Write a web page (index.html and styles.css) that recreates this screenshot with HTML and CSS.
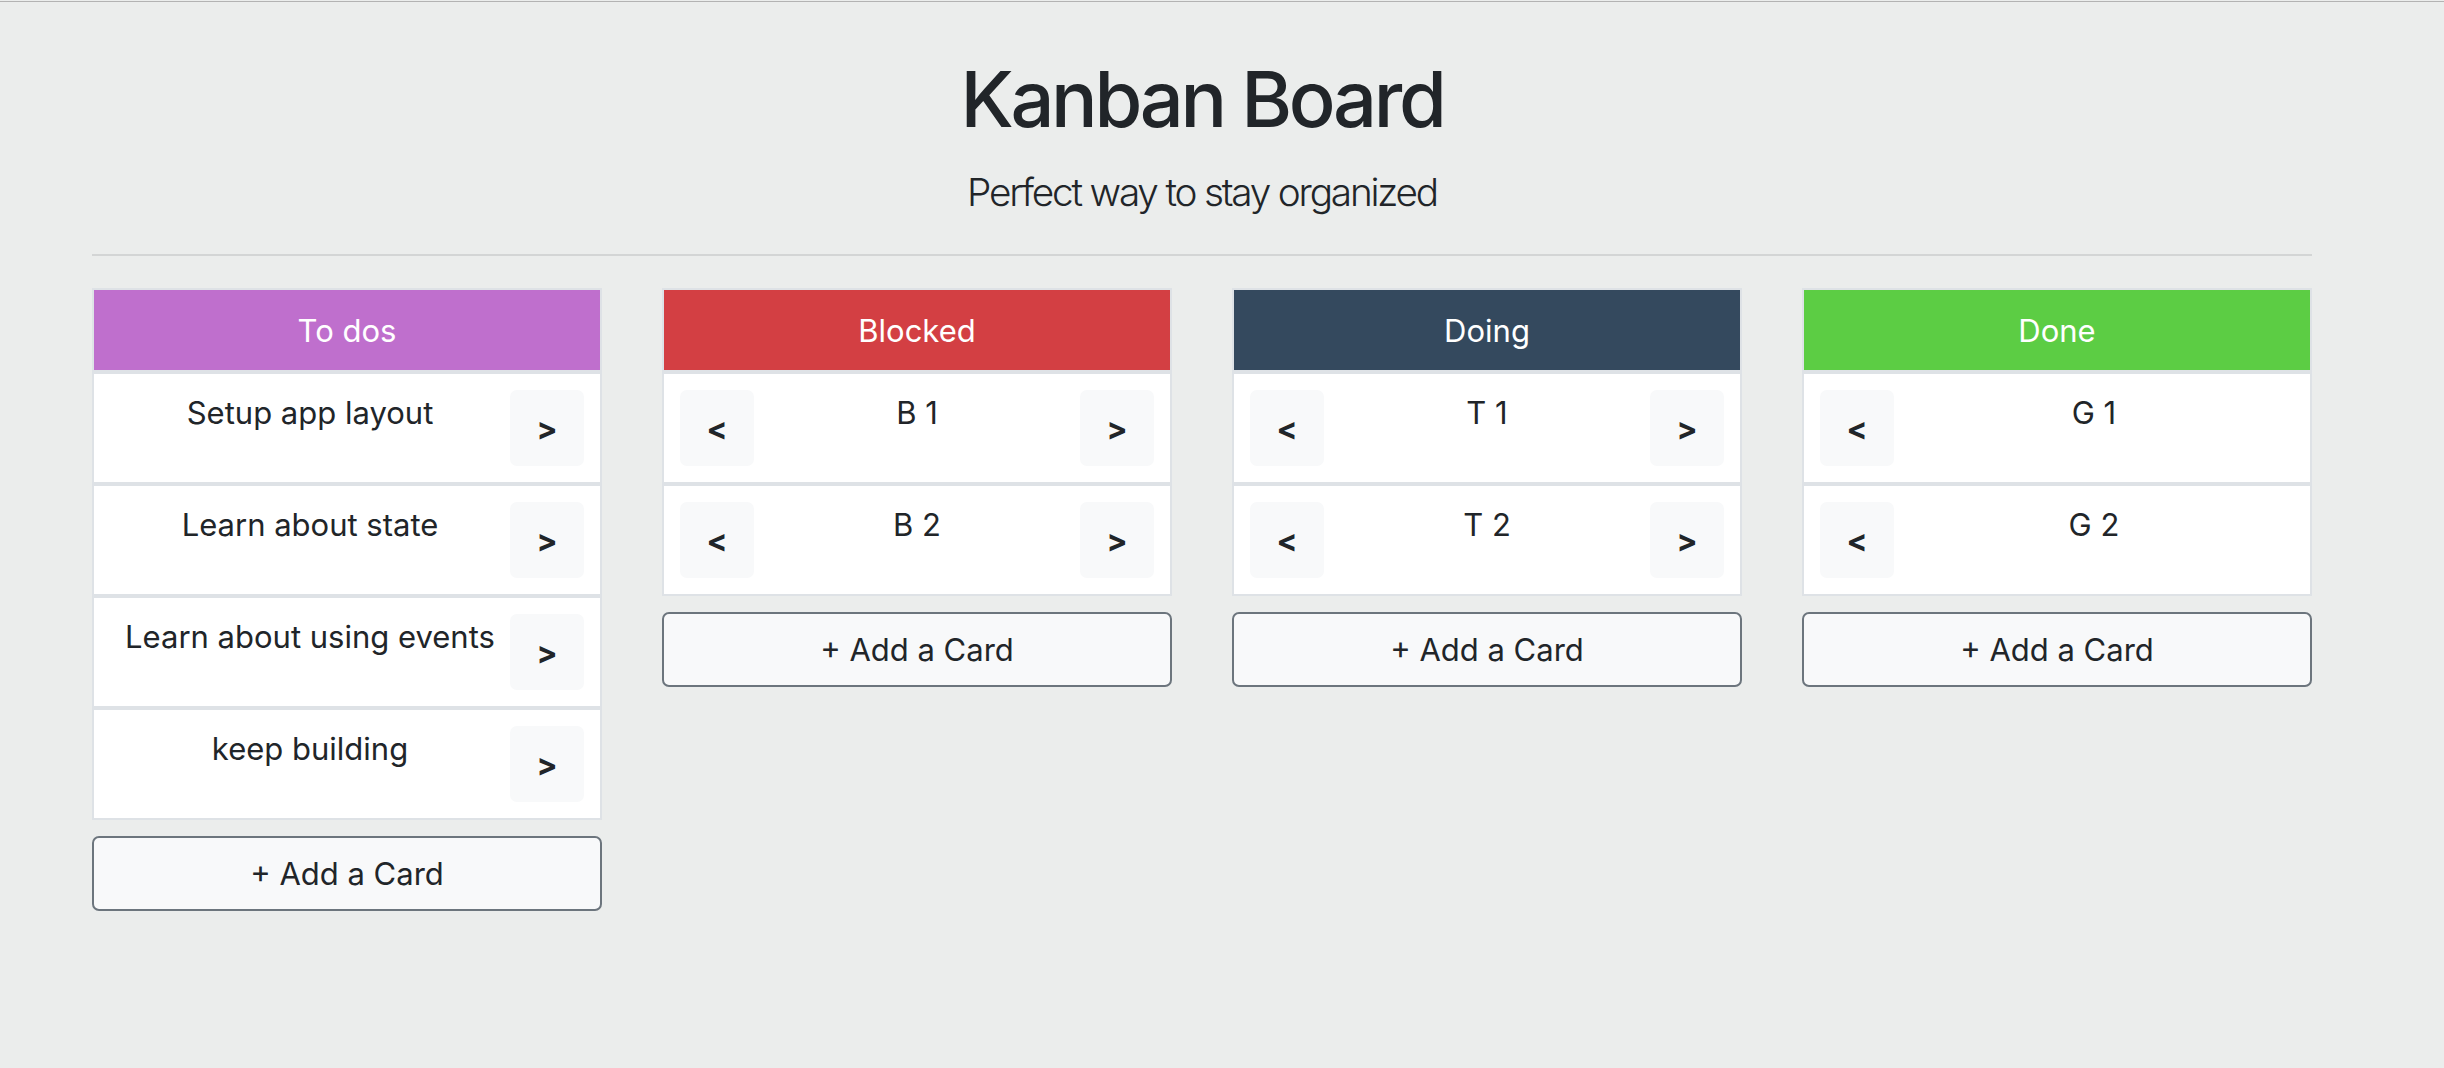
FILE: index.html
```html
<!DOCTYPE html>
<html lang="en">
<head>
<meta charset="utf-8">
<title>Kanban Board</title>
<link rel="stylesheet" href="styles.css">
</head>
<body>
<div class="topline"></div>
<main class="page">
  <h1 class="title">Kanban Board</h1>
  <p class="lead">Perfect way to stay organized</p>
  <hr class="divider">
  <section class="board">
    <div class="lane">
      <div class="column">
        <div class="col-header todo">To dos</div>
        <div class="card"><div class="card-text">Setup app layout</div><button class="move-btn">&gt;</button></div>
        <div class="card"><div class="card-text">Learn about state</div><button class="move-btn">&gt;</button></div>
        <div class="card"><div class="card-text">Learn about using events</div><button class="move-btn">&gt;</button></div>
        <div class="card"><div class="card-text">keep building</div><button class="move-btn">&gt;</button></div>
      </div>
      <button class="add-btn">+ Add a Card</button>
    </div>
    <div class="lane">
      <div class="column">
        <div class="col-header blocked">Blocked</div>
        <div class="card"><button class="move-btn">&lt;</button><div class="card-text">B 1</div><button class="move-btn">&gt;</button></div>
        <div class="card"><button class="move-btn">&lt;</button><div class="card-text">B 2</div><button class="move-btn">&gt;</button></div>
      </div>
      <button class="add-btn">+ Add a Card</button>
    </div>
    <div class="lane">
      <div class="column">
        <div class="col-header doing">Doing</div>
        <div class="card"><button class="move-btn">&lt;</button><div class="card-text">T 1</div><button class="move-btn">&gt;</button></div>
        <div class="card"><button class="move-btn">&lt;</button><div class="card-text">T 2</div><button class="move-btn">&gt;</button></div>
      </div>
      <button class="add-btn">+ Add a Card</button>
    </div>
    <div class="lane">
      <div class="column">
        <div class="col-header done">Done</div>
        <div class="card"><button class="move-btn">&lt;</button><div class="card-text">G 1</div></div>
        <div class="card"><button class="move-btn">&lt;</button><div class="card-text">G 2</div></div>
      </div>
      <button class="add-btn">+ Add a Card</button>
    </div>
  </section>
</main>
</body>
</html>
```

FILE: styles.css
```css
* { box-sizing: border-box; }

html, body {
  margin: 0;
  padding: 0;
  background: #ebedec;
  color: #212529;
  font-family: Inter, "Noto Sans", "Liberation Sans", sans-serif;
}

.topline {
  height: 1px;
  margin-top: 1px;
  background: #b3b3b3;
}

.page {
  width: 2220px;
  margin-left: 92px;
  padding-top: 51px;
}

.title {
  margin: 0;
  font-size: 77.5px;
  line-height: 93px;
  font-weight: 500;
  letter-spacing: -3.3px;
  text-align: center;
}

.lead {
  margin: 17px 0 0;
  font-size: 38.75px;
  line-height: 58px;
  font-weight: 300;
  letter-spacing: -2.2px;
  text-align: center;
}

.divider {
  margin: 33px 0 32px;
  height: 2px;
  border: 0;
  background: #d3d5d5;
}

.board {
  display: grid;
  grid-template-columns: repeat(4, 510px);
  column-gap: 60px;
  align-items: start;
}

.lane {
  display: flex;
  flex-direction: column;
  gap: 16px;
}

.column {
  display: flex;
  flex-direction: column;
  gap: 4px;
  padding: 2px;
  background: #dee2e6;
}

.col-header {
  height: 80px;
  display: flex;
  align-items: center;
  justify-content: center;
  color: #ffffff;
  font-size: 31px;
  font-weight: 400;
}

.todo { background: #bf6fcd; }
.blocked { background: #d33f43; }
.doing { background: #34495e; }
.done { background: #5ccd44; }

.card {
  height: 108px;
  padding: 16px;
  background: #ffffff;
  display: flex;
  align-items: flex-start;
}

.card-text {
  flex: 1;
  text-align: center;
  font-size: 31px;
  line-height: 46.5px;
}

.move-btn {
  width: 74px;
  height: 76px;
  padding: 0;
  border: 0;
  border-radius: 7px;
  background: #f8f9fa;
  color: #212529;
  font-family: inherit;
  font-size: 31px;
  font-weight: 700;
  line-height: 1;
  display: flex;
  align-items: center;
  justify-content: center;
  padding-top: 1px;
}

.add-btn {
  height: 75px;
  width: 100%;
  border: 2px solid #6c757d;
  border-radius: 7px;
  background: #f8f9fa;
  color: #212529;
  font-family: inherit;
  font-size: 31px;
  font-weight: 400;
}
```
